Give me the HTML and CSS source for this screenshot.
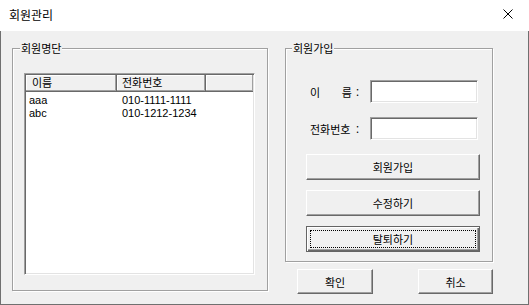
FILE: index.html
```html
<!DOCTYPE html>
<html lang="ko">
<head>
	<meta charset="UTF-8">
	<title>회원관리</title>
	<link rel="stylesheet" href="styles.css">
</head>
<body>
	<div class="window">
		<div class="titlebar">
			<span class="title">회원관리</span>
			<svg class="close" width="10" height="10" viewBox="0 0 10 10">
				<path d="M0.5 0.5 L9.5 9.5 M9.5 0.5 L0.5 9.5" stroke="#000" stroke-width="1" fill="none"/>
			</svg>
		</div>

		<div class="client">
			<div class="group list-group">
				<div class="group-title">회원명단</div>
				<div class="listview">
					<div class="lv-header">
						<div class="lv-col c1">이름</div>
						<div class="lv-col c2">전화번호</div>
						<div class="lv-col c3"></div>
					</div>
					<div class="lv-body">
						<div class="lv-row"><span class="c1">aaa</span><span class="c2">010-1111-1111</span></div>
						<div class="lv-row"><span class="c1">abc</span><span class="c2">010-1212-1234</span></div>
					</div>
				</div>
			</div>

			<div class="right-side">
				<div class="group join-group">
					<div class="group-title">회원가입</div>
					<div class="field">
						<span class="label short">이 름</span><span class="colon">:</span>
						<div class="textbox"></div>
					</div>
					<div class="field">
						<span class="label">전화번호</span><span class="colon">:</span>
						<div class="textbox"></div>
					</div>
					<div class="actions">
						<button class="btn">회원가입</button>
						<button class="btn">수정하기</button>
						<button class="btn focused">탈퇴하기</button>
					</div>
				</div>
				<div class="dialog-buttons">
					<button class="btn small">확인</button>
					<button class="btn small cancel">취소</button>
				</div>
			</div>
		</div>
	</div>
</body>
</html>
```

FILE: styles.css
```css
body {
	margin: 0;
	font-family: "Liberation Sans", "Noto Sans CJK KR", sans-serif;
	font-size: 11px;
	color: #000;
	background: #fff;
}

.window {
	width: 529px;
	height: 305px;
	display: flex;
	flex-direction: column;
}

.titlebar {
	height: 31px;
	flex: none;
	background: #fff;
	display: flex;
	align-items: center;
	justify-content: space-between;
	padding: 0 16px 0 9px;
}
.title {
	font-family: "Noto Sans CJK KR", sans-serif;
	font-size: 12px;
	line-height: 16px;
	margin-top: -1px;
}
.close {
	display: block;
	margin-top: -3px;
}

.client {
	flex: 1;
	background: #f0f0f0;
	border: 1px solid #707070;
	border-top: none;
	display: flex;
	align-items: flex-start;
	padding: 17px 0 0 11px;
}

/* etched group box */
.group {
	position: relative;
	box-sizing: border-box;
	border: 1px solid #a0a0a0;
	box-shadow: inset 1px 1px 0 #fff, 1px 1px 0 #fff;
}
.group-title {
	position: absolute;
	top: -8px;
	left: 7px;
	padding: 0 1px;
	background: #f0f0f0;
	line-height: 15px;
	font-family: "Noto Sans CJK KR", sans-serif;
}
.join-group .group-title {
	left: 6px;
}

.list-group {
	width: 256px;
	height: 243px;
	margin-right: 17px;
	padding: 24px 0 0 11px;
}

/* sunken list */
.listview {
	width: 231px;
	height: 202px;
	box-sizing: border-box;
	background: #fff;
	border: 1px solid;
	border-color: #a0a0a0 #fff #fff #a0a0a0;
	box-shadow: inset 1px 1px 0 #696969, inset -1px -1px 0 #e3e3e3;
	padding: 1px;
}
.lv-header {
	display: flex;
	height: 17px;
}
.lv-col {
	box-sizing: border-box;
	height: 17px;
	line-height: 15px;
	background: #f0f0f0;
	border-right: 1px solid #696969;
	border-bottom: 1px solid #696969;
	box-shadow: inset -1px -1px 0 #a0a0a0, inset 1px 1px 0 #fff;
	font-family: "Noto Sans CJK KR", sans-serif;
}
.lv-col.c1 {
	width: 91px;
	padding-left: 6px;
}
.lv-col.c2 {
	width: 89px;
	padding-left: 5px;
}
.lv-col.c3 {
	flex: 1;
	border-right: none;
}
.lv-body {
	padding-top: 2px;
}
.lv-row {
	display: flex;
	line-height: 12.5px;
}
.lv-row .c1 {
	width: 91px;
	padding-left: 3px;
	box-sizing: border-box;
}
.lv-row .c2 {
	padding-left: 5px;
}

.right-side {
	width: 208px;
}
.join-group {
	height: 214px;
	padding: 31px 0 0 24px;
}
.field {
	display: flex;
	align-items: center;
	height: 23px;
	margin-bottom: 14px;
	font-family: "Noto Sans CJK KR", sans-serif;
}
.label {
	width: 46px;
	box-sizing: border-box;
	text-align: justify;
	text-align-last: justify;
}
.label.short {
	padding-right: 4px;
}
.colon {
	width: 14px;
}
.textbox {
	width: 108px;
	height: 23px;
	box-sizing: border-box;
	background: #fff;
	border: 1px solid;
	border-color: #a0a0a0 #fff #fff #a0a0a0;
	box-shadow: inset 1px 1px 0 #696969, inset -1px -1px 0 #e3e3e3;
}

.actions {
	display: flex;
	flex-direction: column;
	gap: 10px;
	margin: 2px 0 0 -4px;
}

/* classic 3d button */
.btn {
	position: relative;
	width: 174px;
	height: 26px;
	box-sizing: border-box;
	padding: 0;
	margin: 0;
	background: #f0f0f0;
	border: 1px solid;
	border-color: #fff #696969 #696969 #fff;
	box-shadow: inset -1px -1px 0 #a0a0a0;
	font-family: "Noto Sans CJK KR", sans-serif;
	font-size: 11px;
	color: #000;
}
.btn.focused {
	border-color: #646464;
	box-shadow: inset 1px 1px 0 #fff, inset -1px -1px 0 #696969, inset -2px -2px 0 #a0a0a0;
}
.btn.focused::after {
	content: "";
	position: absolute;
	top: 3px;
	left: 3px;
	right: 3px;
	bottom: 3px;
	border: 1px dotted #000;
}

.dialog-buttons {
	display: flex;
	justify-content: space-between;
	margin-top: 7px;
	padding-left: 12px;
}
.btn.small {
	width: 76px;
	height: 25px;
}
.btn.small.cancel {
	width: 75px;
}
```
